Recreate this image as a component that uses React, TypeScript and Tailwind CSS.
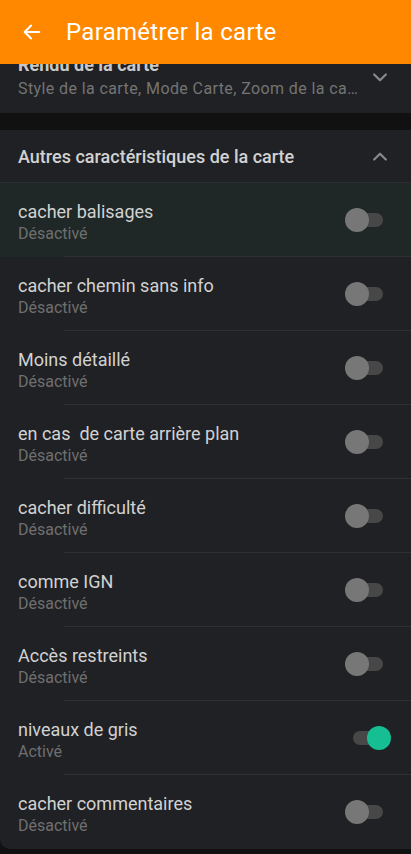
import React from "react";

const rows: { title: string; on: boolean }[] = [
  { title: "cacher balisages", on: false },
  { title: "cacher chemin sans info", on: false },
  { title: "Moins détaillé", on: false },
  { title: "en cas  de carte arrière plan", on: false },
  { title: "cacher difficulté", on: false },
  { title: "comme IGN", on: false },
  { title: "Accès restreints", on: false },
  { title: "niveaux de gris", on: true },
  { title: "cacher commentaires", on: false },
];

function Toggle({ on }: { on: boolean }) {
  return (
    <div className="relative w-[46px] h-[24px] mr-[20px]">
      <div className="absolute left-[8px] top-[5px] w-[30px] h-[14px] rounded-full bg-[#474747]" />
      <div
        className={
          on
            ? "absolute left-[22px] top-0 w-[24px] h-[24px] rounded-full bg-[#15bf93]"
            : "absolute left-0 top-0 w-[24px] h-[24px] rounded-full bg-[#777777]"
        }
      />
    </div>
  );
}

export default function App() {
  return (
    <div
      className="w-[411px] h-[854px] overflow-hidden bg-[#111111]"
      style={{ fontFamily: "Roboto, 'Noto Sans', sans-serif" }}
    >
      <div className="h-[64px] bg-[#ff8800] flex items-center">
        <svg width="22" height="22" viewBox="0 0 24 24" className="ml-[21px]" fill="none" stroke="white" strokeWidth="2.2" strokeLinecap="round" strokeLinejoin="round">
          <path d="M20 12H4.5" />
          <path d="M11 5l-7 7 7 7" />
        </svg>
        <span className="ml-[23px] text-white text-[24px] leading-none tracking-[0.3px]">Paramétrer la carte</span>
      </div>

      <div className="h-[49px] bg-[#202124] overflow-hidden relative">
        <div className="-mt-[11px] pl-[18px] pr-[48px]">
          <div className="text-[18px] leading-[24px] font-bold text-[#c8c8c8]">Rendu de la carte</div>
          <div className="text-[16px] leading-[20px] mt-[2px] text-[#747474] whitespace-nowrap overflow-hidden text-ellipsis tracking-[0.4px]">
            Style de la carte, Mode Carte, Zoom de la carte, Détails
          </div>
        </div>
        <svg width="20" height="20" viewBox="0 0 24 24" className="absolute left-[370px] top-[3px]" fill="none" stroke="#8a8a8a" strokeWidth="2.6" strokeLinecap="round" strokeLinejoin="round">
          <path d="M5 9l7 7 7-7" />
        </svg>
      </div>

      <div className="h-[17px] bg-[#111111]" />

      <div className="bg-[#202124] rounded-bl-[10px]">
        <div className="h-[53px] flex items-center relative border-b border-[#2b2c2e]">
          <span className="ml-[18px] text-[18px] font-medium text-[#d2d2d2]">Autres caractéristiques de la carte</span>
          <svg width="20" height="20" viewBox="0 0 24 24" className="absolute left-[370px] top-[17px]" fill="none" stroke="#8a8a8a" strokeWidth="2.6" strokeLinecap="round" strokeLinejoin="round">
            <path d="M5 15l7-7 7 7" />
          </svg>
        </div>
        {rows.map((r, i) => (
          <div
            key={r.title}
            className={
              i === 0
                ? "h-[74px] flex items-center bg-[#1f2827] relative"
                : "h-[74px] flex items-center relative"
            }
          >
            <div className="flex-1 pl-[18px] pt-[3px]">
              <div className="text-[18px] leading-[24px] text-[#d2d2d2] whitespace-pre">{r.title}</div>
              <div className="text-[16px] leading-[20px] text-[#6f6f6f]">{r.on ? "Activé" : "Désactivé"}</div>
            </div>
            <Toggle on={r.on} />
            {i < rows.length - 1 && (
              <div className="absolute left-[64px] right-0 bottom-0 h-px bg-[#2f3032]" />
            )}
          </div>
        ))}
      </div>
    </div>
  );
}
